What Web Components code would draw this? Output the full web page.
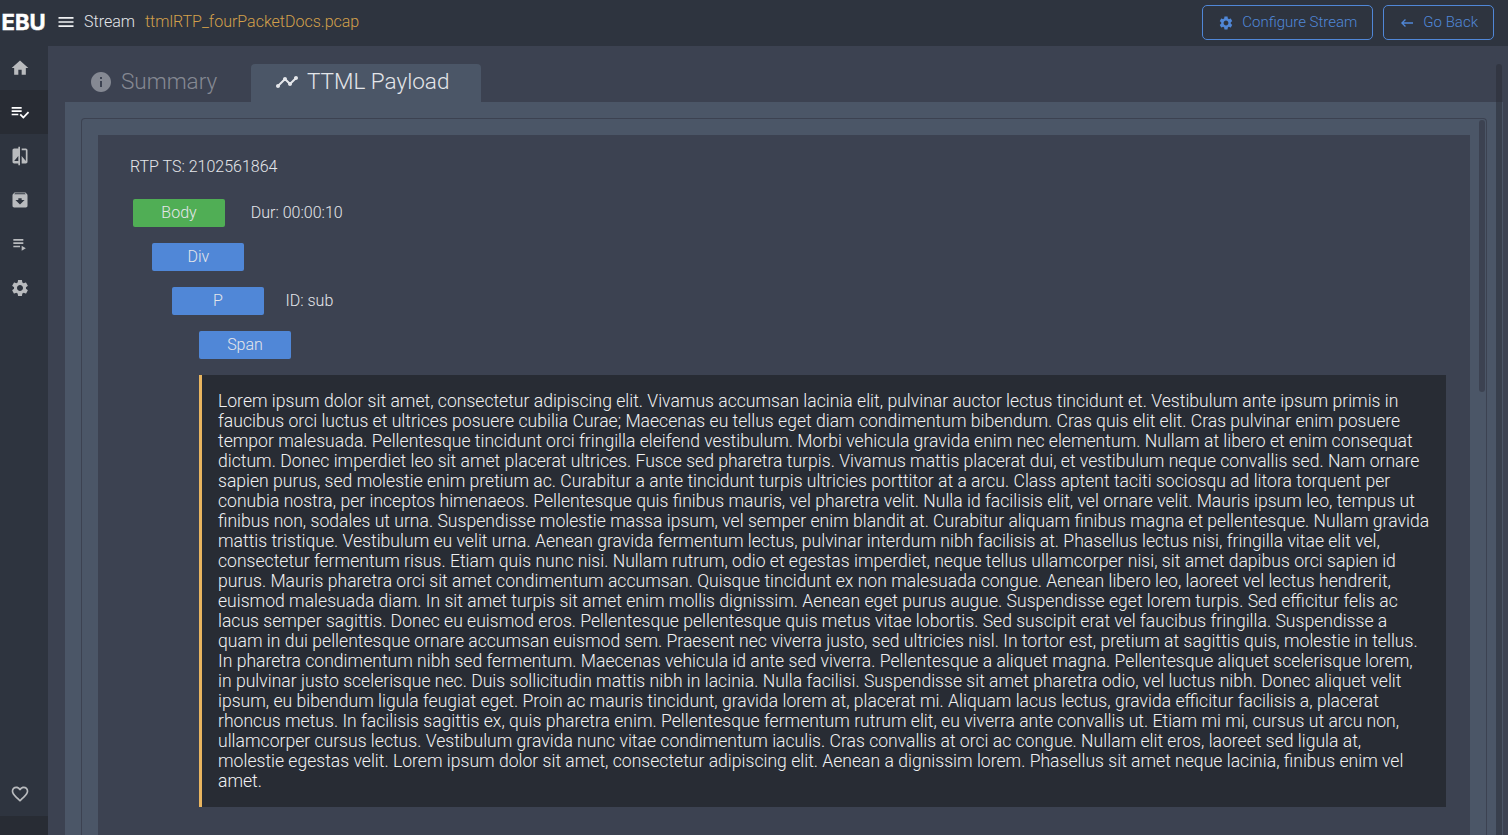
<!DOCTYPE html>
<html lang="en">
<head>
<meta charset="utf-8">
<title>Stream</title>
<style>
html,body{margin:0;height:100%;overflow:hidden;background:#3c4251}
body{font-family:Roboto,"Liberation Sans",sans-serif;font-weight:300;font-size:16px;color:#e4e6ea}
</style>
</head>
<body>
<ebu-app>
  <ebu-topbar slot="top" heading="Stream" file="ttmlRTP_fourPacketDocs.pcap">
    <ebu-button icon="gear">Configure Stream</ebu-button>
    <ebu-button icon="back">Go Back</ebu-button>
  </ebu-topbar>
  <ebu-sidebar slot="side"></ebu-sidebar>
  <ebu-tabs>
    <ebu-tab slot="tab" icon="info" style="width:186px">Summary</ebu-tab>
    <ebu-tab slot="tab" icon="timeline" active style="width:230px">TTML Payload</ebu-tab>
    <ebu-payload>
      <span slot="ts">RTP TS: 2102561864</span>
      <ebu-node label="Body" style="--indent:35px;--tone:#50ae55;--gap:25.8px">Dur: 00:00:10</ebu-node>
      <ebu-node label="Div" style="--indent:54.4px"></ebu-node>
      <ebu-node label="P" style="--indent:74px">ID: sub</ebu-node>
      <ebu-node label="Span" style="--indent:101px"></ebu-node>
      <ebu-quote>Lorem ipsum dolor sit amet, consectetur adipiscing elit. Vivamus accumsan lacinia elit, pulvinar auctor lectus tincidunt et. Vestibulum ante ipsum primis in
faucibus orci luctus et ultrices posuere cubilia Curae; Maecenas eu tellus eget diam condimentum bibendum. Cras quis elit elit. Cras pulvinar enim posuere
tempor malesuada. Pellentesque tincidunt orci fringilla eleifend vestibulum. Morbi vehicula gravida enim nec elementum. Nullam at libero et enim consequat
dictum. Donec imperdiet leo sit amet placerat ultrices. Fusce sed pharetra turpis. Vivamus mattis placerat dui, et vestibulum neque convallis sed. Nam ornare
sapien purus, sed molestie enim pretium ac. Curabitur a ante tincidunt turpis ultricies porttitor at a arcu. Class aptent taciti sociosqu ad litora torquent per
conubia nostra, per inceptos himenaeos. Pellentesque quis finibus mauris, vel pharetra velit. Nulla id facilisis elit, vel ornare velit. Mauris ipsum leo, tempus ut
finibus non, sodales ut urna. Suspendisse molestie massa ipsum, vel semper enim blandit at. Curabitur aliquam finibus magna et pellentesque. Nullam gravida
mattis tristique. Vestibulum eu velit urna. Aenean gravida fermentum lectus, pulvinar interdum nibh facilisis at. Phasellus lectus nisi, fringilla vitae elit vel,
consectetur fermentum risus. Etiam quis nunc nisi. Nullam rutrum, odio et egestas imperdiet, neque tellus ullamcorper nisi, sit amet dapibus orci sapien id
purus. Mauris pharetra orci sit amet condimentum accumsan. Quisque tincidunt ex non malesuada congue. Aenean libero leo, laoreet vel lectus hendrerit,
euismod malesuada diam. In sit amet turpis sit amet enim mollis dignissim. Aenean eget purus augue. Suspendisse eget lorem turpis. Sed efficitur felis ac
lacus semper sagittis. Donec eu euismod eros. Pellentesque pellentesque quis metus vitae lobortis. Sed suscipit erat vel faucibus fringilla. Suspendisse a
quam in dui pellentesque ornare accumsan euismod sem. Praesent nec viverra justo, sed ultricies nisl. In tortor est, pretium at sagittis quis, molestie in tellus.
In pharetra condimentum nibh sed fermentum. Maecenas vehicula id ante sed viverra. Pellentesque a aliquet magna. Pellentesque aliquet scelerisque lorem,
in pulvinar justo scelerisque nec. Duis sollicitudin mattis nibh in lacinia. Nulla facilisi. Suspendisse sit amet pharetra odio, vel luctus nibh. Donec aliquet velit
ipsum, eu bibendum ligula feugiat eget. Proin ac mauris tincidunt, gravida lorem at, placerat mi. Aliquam lacus lectus, gravida efficitur facilisis a, placerat
rhoncus metus. In facilisis sagittis ex, quis pharetra enim. Pellentesque fermentum rutrum elit, eu viverra ante convallis ut. Etiam mi mi, cursus ut arcu non,
ullamcorper cursus lectus. Vestibulum gravida nunc vitae condimentum iaculis. Cras convallis at orci ac congue. Nullam elit eros, laoreet sed ligula at,
molestie egestas velit. Lorem ipsum dolor sit amet, consectetur adipiscing elit. Aenean a dignissim lorem. Phasellus sit amet neque lacinia, finibus enim vel
amet.</ebu-quote>
    </ebu-payload>
  </ebu-tabs>
</ebu-app>
<script>
const GEAR='M19.14 12.94c.04-.3.06-.61.06-.94 0-.32-.02-.64-.07-.94l2.03-1.58c.18-.14.23-.41.12-.61l-1.92-3.32c-.12-.22-.37-.29-.59-.22l-2.39.96c-.5-.38-1.03-.7-1.62-.94l-.36-2.54c-.04-.24-.24-.41-.48-.41h-3.84c-.24 0-.43.17-.47.41l-.36 2.54c-.59.24-1.13.57-1.62.94l-2.39-.96c-.22-.08-.47 0-.59.22L2.74 8.87c-.12.21-.08.47.12.61l2.03 1.58c-.05.3-.09.63-.09.94s.02.64.07.94l-2.03 1.58c-.18.14-.23.41-.12.61l1.92 3.32c.12.22.37.29.59.22l2.39-.96c.5.38 1.03.7 1.62.94l.36 2.54c.05.24.24.41.48.41h3.84c.24 0 .44-.17.47-.41l.36-2.54c.59-.24 1.13-.56 1.62-.94l2.39.96c.22.08.47 0 .59-.22l1.92-3.32c.12-.22.07-.47-.12-.61l-2.01-1.58zM12 15.6c-1.98 0-3.6-1.62-3.6-3.6s1.62-3.6 3.6-3.6 3.6 1.62 3.6 3.6-1.62 3.6-3.6 3.6z';
const ICONS={
 gear:GEAR,
 back:'M21 11H6.83l3.58-3.59L9 6l-6 6 6 6 1.41-1.41L6.83 13H21z',
 menu:'M3 18h18v-2H3v2zm0-5h18v-2H3v2zm0-7v2h18V6H3z',
 home:'M10 20v-6h4v6h5v-8h3L12 3 2 12h3v8z',
 check:'M14 10H2v2h12v-2zm0-4H2v2h12V6zM2 16h8v-2H2v2zm19.5-4.5L23 13l-6.99 7-4.51-4.5L13 14l3.01 3 5.49-5.5z',
 compare:'M10 3H5c-1.1 0-2 .9-2 2v14c0 1.1.9 2 2 2h5v2h2V1h-2v2zm0 15H5l5-6v6zm9-15h-5v2h5v13l-5-6v9h5c1.1 0 2-.9 2-2V5c0-1.1-.9-2-2-2z',
 archive:'M20.54 5.23l-1.39-1.68C18.88 3.21 18.47 3 18 3H6c-.47 0-.88.21-1.16.55L3.46 5.23C3.17 5.57 3 6.02 3 6.5V19c0 1.1.9 2 2 2h14c1.1 0 2-.9 2-2V6.5c0-.48-.17-.93-.46-1.27zM12 17.5L6.5 12H10v-2h4v2h3.5L12 17.5zM5.12 5l.81-1h12l.94 1H5.12z',
 play:'M4 10h12v2H4zM4 6h12v2H4zM4 14h8v2H4zM14 14v6l5-3z',
 heart:'M16.5 3c-1.74 0-3.41.81-4.5 2.09C10.91 3.81 9.24 3 7.5 3 4.42 3 2 5.42 2 8.5c0 3.78 3.4 6.86 8.55 11.54L12 21.35l1.45-1.32C18.6 15.36 22 12.28 22 8.5 22 5.42 19.58 3 16.5 3zm-4.4 15.55l-.1.1-.1-.1C7.14 14.24 4 11.39 4 8.5 4 6.5 5.5 5 7.5 5c1.54 0 3.04.99 3.57 2.36h1.87C13.46 5.99 14.96 5 16.5 5c2 0 3.5 1.5 3.5 3.5 0 2.89-3.14 5.74-7.9 10.05z',
 info:'M12 2C6.48 2 2 6.48 2 12s4.48 10 10 10 10-4.48 10-10S17.52 2 12 2zm1 15h-2v-6h2v6zm0-8h-2V7h2v2z',
 timeline:'M23 8c0 1.1-.9 2-2 2-.18 0-.35-.02-.51-.07l-3.56 3.55c.05.16.07.34.07.52 0 1.1-.9 2-2 2s-2-.9-2-2c0-.18.02-.36.07-.52l-2.55-2.55c-.16.05-.34.07-.52.07s-.36-.02-.52-.07l-4.55 4.56c.05.16.07.33.07.51 0 1.1-.9 2-2 2s-2-.9-2-2 .9-2 2-2c.18 0 .35.02.51.07l4.56-4.55C8.02 9.36 8 9.18 8 9c0-1.1.9-2 2-2s2 .9 2 2c0 .18-.02.36-.07.52l2.55 2.55c.16-.05.34-.07.52-.07s.36.02.52.07l3.55-3.56C19.02 8.35 19 8.18 19 8c0-1.1.9-2 2-2s2 .9 2 2z'
};
const icon=(n,s)=>`<svg width="${s}" height="${s}" viewBox="0 0 24 24" fill="currentColor"><path d="${ICONS[n]}"/></svg>`;
const element=(name,render)=>customElements.define(name,class extends HTMLElement{
  constructor(){super();this.attachShadow({mode:'open'});}
  connectedCallback(){this.shadowRoot.innerHTML=render(this);}
});

element('ebu-app',()=>`<style>
:host{display:grid;height:100vh;grid-template:46px 1fr / 48px 1fr;overflow:hidden}
.top{grid-column:1/3}
main{min-width:0;min-height:0;overflow:hidden;display:flex}
::slotted(ebu-tabs){flex:1}
</style><div class="top"><slot name="top"></slot></div><slot name="side"></slot><main><slot></slot></main>`);

element('ebu-topbar',e=>`<style>
:host{display:flex;align-items:center;height:46px;box-sizing:border-box;background:#2e343f;padding:0 14px 2px 1.5px}
.logo{font:700 22px/44px Inter,sans-serif;letter-spacing:.1px;color:#fff;width:54.5px;-webkit-text-stroke:.5px #fff}
svg{display:block;margin-right:8px;color:#f0f1f3}
.name,.file{line-height:20px}
.file{color:#d3a04b;margin-left:10px;flex:1}
.acts{display:flex;gap:10px}
</style><span class="logo">EBU</span>${icon('menu',20)}<span class="name">${e.getAttribute('heading')}</span><span class="file">${e.getAttribute('file')}</span><div class="acts"><slot></slot></div>`);

element('ebu-button',e=>`<style>
:host{display:flex;align-items:center;box-sizing:border-box;height:35px;border:1px solid #5087d7;border-radius:5px;color:#5087d7;padding:0 15px;font-size:15px}
svg{margin-right:8px;position:relative;top:1px}
</style>${icon(e.getAttribute('icon'),16)}<slot></slot>`);

element('ebu-sidebar',()=>`<style>
:host{display:flex;flex-direction:column;background:#2e343f;color:#b9bbbe;box-sizing:border-box}
.item{height:44px;display:flex;align-items:center;padding-left:10px}
.on{background:#282c34;color:#fff}
.space{flex:1}
.foot{height:19px;background:#282c34}
</style>${['home','check','compare','archive','play','gear'].map(n=>`<div class="item ${n==='check'?'on':''}">${icon(n,20)}</div>`).join('')}
<div class="space"></div><div class="item">${icon('heart',20)}</div><div class="foot"></div>`);

element('ebu-tabs',()=>`<style>
:host{display:flex;flex-direction:column;padding:18px 5px 0 17px;position:relative;box-sizing:border-box}
.bar{display:flex;height:38px}
.panel{flex:1;min-height:0;background:#4b5667;padding:16px 16px 0;display:flex}
.thumb{position:absolute;left:1448px;top:18px;bottom:-8px;width:6px;border-radius:3px;background:#292d36;opacity:.55}
::slotted(ebu-payload){flex:1}
</style><div class="bar"><slot name="tab"></slot></div><div class="panel"><slot></slot></div><div class="thumb"></div>`);

element('ebu-tab',e=>`<style>
:host{display:flex;align-items:center;box-sizing:border-box;height:38px;padding:0 0 5px 24px;font-size:22.5px;color:#858993;border-radius:4px 4px 0 0}
:host([active]){background:#4b5667;color:#e4e6ea}
svg{margin-right:8px;position:relative;top:1px}
</style>${icon(e.getAttribute('icon'),24)}<slot></slot>`);

element('ebu-payload',()=>`<style>
:host{display:block;box-sizing:border-box;border:1px solid #3c4251;border-bottom:0;border-radius:4px 4px 0 0;padding:16px 16px 0;position:relative;height:760px}
.card{background:#3c4251;height:760px;padding-top:22px;box-sizing:border-box}
.ts{line-height:20px;padding-left:32px;margin-bottom:22px}
.thumb{position:absolute;right:1px;top:1px;width:6px;height:272px;border-radius:3px;background:#3c4251}
</style><div class="card"><div class="ts"><slot name="ts"></slot></div><slot></slot></div><div class="thumb"></div>`);

element('ebu-node',e=>`<style>
:host{display:flex;align-items:center;height:28px;margin-bottom:16px;padding-left:var(--indent)}
.tag{width:92px;height:28px;line-height:27px;text-align:center;background:var(--tone,#5087d7);border-radius:2px;margin-right:var(--gap,21.5px)}
.val{line-height:27px;height:28px}
</style><span class="tag">${e.getAttribute('label')}</span><span class="val"><slot></slot></span>`);

element('ebu-quote',()=>`<style>
:host{display:block;margin:0 24px 0 101px;padding:16px;border-left:3px solid #e9b55f;background:#282c34;font-size:17.58px;line-height:20px;white-space:pre;color:#f0f1f3}
</style><slot></slot>`);
</script>
</body>
</html>
